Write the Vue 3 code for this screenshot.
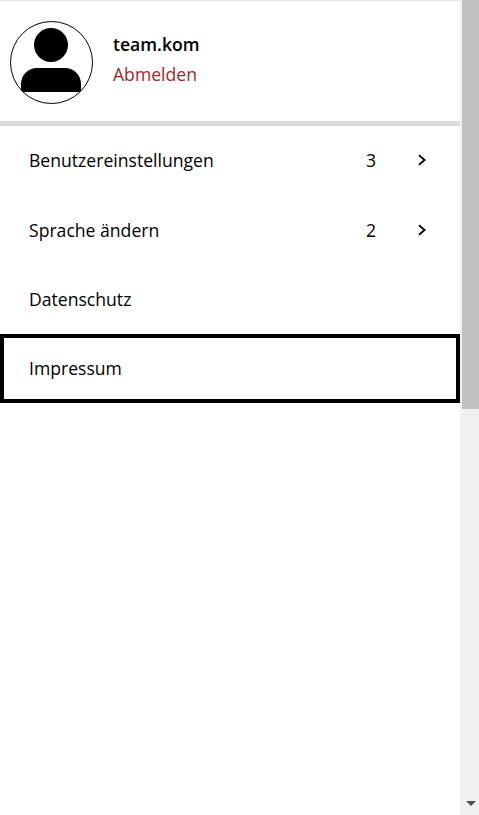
<script setup>
const items = [
  { label: 'Benutzereinstellungen', count: 3 },
  { label: 'Sprache ändern', count: 2 },
  { label: 'Datenschutz' },
  { label: 'Impressum', focused: true }
]
</script>

<template>
  <div class="page">
    <div class="panel">
      <div class="user">
        <svg class="avatar" width="83" height="83" viewBox="0 0 83 83">
          <defs>
            <clipPath id="ring"><circle cx="41.5" cy="41.5" r="41" /></clipPath>
          </defs>
          <circle cx="41.5" cy="41.5" r="41" fill="#fff" />
          <circle cx="41" cy="24" r="17" fill="#000" />
          <path d="M11 71V63C11 54 18 47 27 47H55C64 47 71 54 71 63V71Z" fill="#000" clip-path="url(#ring)" />
          <circle cx="41.5" cy="41.5" r="41" fill="none" stroke="#000" stroke-width="1" />
        </svg>
        <div class="names">
          <div class="name">team.kom</div>
          <a class="logout">Abmelden</a>
        </div>
      </div>
      <ul class="menu">
        <li v-for="item in items" :key="item.label" class="row" :class="{ focused: item.focused }">
          <span class="label">{{ item.label }}</span>
          <span v-if="item.count" class="count">{{ item.count }}</span>
          <svg v-if="item.count" class="chevron" width="10" height="12" viewBox="0 0 10 12">
            <path d="M2 1.2L7.6 6L2 10.8" fill="none" stroke="#000" stroke-width="1.8" />
          </svg>
        </li>
      </ul>
    </div>
    <div class="scrollbar">
      <div class="thumb"></div>
      <div class="track">
        <span class="arrow"></span>
      </div>
    </div>
  </div>
</template>

<style scoped>
.page {
  display: flex;
  height: 815px;
  overflow: hidden;
  font-family: "Open Sans", "Liberation Sans", sans-serif;
  color: #000;
  background: #fff;
}
.panel {
  width: 460px;
  flex-shrink: 0;
}
.user {
  display: flex;
  align-items: center;
  gap: 20px;
  height: 126px;
  box-sizing: border-box;
  padding: 3px 0 0 10px;
  border-top: 1px solid #e4e4e4;
  border-bottom: 5px solid #dcdcdc;
}
.avatar {
  display: block;
  flex-shrink: 0;
}
.names {
  display: flex;
  flex-direction: column;
  gap: 6px;
  margin-bottom: 7px;
}
.name {
  font-size: 17.6px;
  font-weight: 600;
  line-height: 24px;
}
.logout {
  font-size: 17.6px;
  line-height: 24px;
  color: #a4262c;
}
.menu {
  list-style: none;
  margin: -0.4px 0 0;
  padding: 0;
}
.row {
  display: flex;
  align-items: center;
  height: 69.4px;
  box-sizing: border-box;
  padding-left: 29px;
  font-size: 17.6px;
}
.row.focused {
  border: 4px solid #000;
  padding-left: 25px;
  height: 69px;
}
.label {
  flex: 1;
}
.count {
  margin-right: 41px;
}
.chevron {
  display: block;
  margin-right: 33px;
}
.scrollbar {
  flex: 1;
  display: flex;
  flex-direction: column;
  background: #f0f0f0;
  padding-left: 2px;
}
.thumb {
  height: 409px;
  background: #c1c1c1;
}
.track {
  flex: 1;
  display: flex;
  align-items: flex-end;
  justify-content: center;
  padding-bottom: 9px;
}
.arrow {
  width: 0;
  height: 0;
  border-left: 5px solid transparent;
  border-right: 5px solid transparent;
  border-top: 5px solid #505050;
}
</style>
